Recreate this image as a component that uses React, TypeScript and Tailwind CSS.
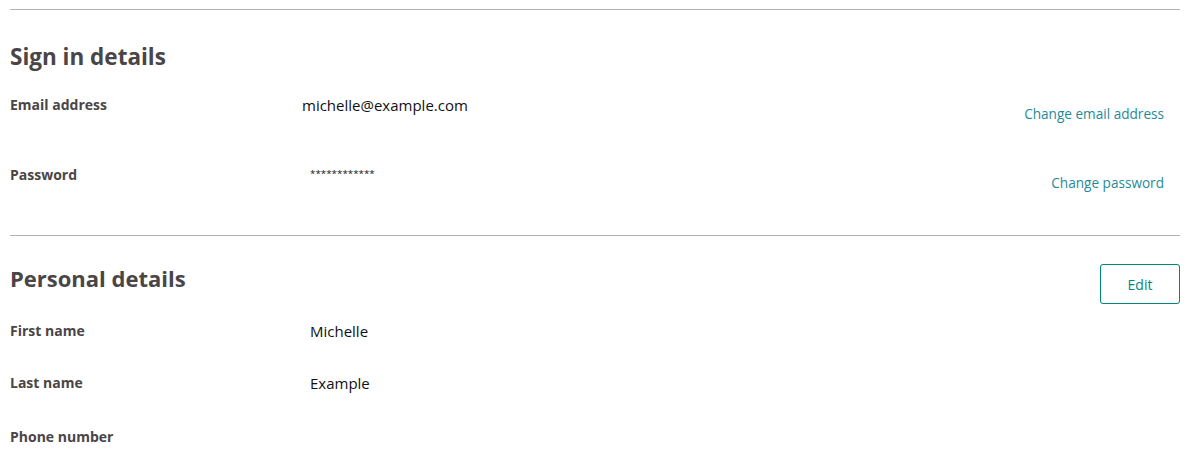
const font = { fontFamily: '"Open Sans", "Lato", sans-serif' };

function Row({
  label,
  value,
  valueClass = "ml-2 text-[15px] leading-5",
  action,
  actionClass = "",
  className = "",
}: {
  label: string;
  value?: string;
  valueClass?: string;
  action?: string;
  actionClass?: string;
  className?: string;
}) {
  return (
    <div className={`flex items-start ${className}`}>
      <div className="w-[292px] shrink-0 text-[14px] leading-5 font-bold text-[#4a4546]">
        {label}
      </div>
      <div className={`flex-1 text-[#111] ${valueClass}`}>{value}</div>
      {action && (
        <a
          href="#"
          className={`pr-4 text-[13.6px] leading-5 text-[#1f8a99] ${actionClass}`}
        >
          {action}
        </a>
      )}
    </div>
  );
}

export default function App() {
  return (
    <div className="min-h-[460px] bg-white px-[10px] pt-[9px]" style={font}>
      {/* Sign in details */}
      <hr className="border-0 border-t border-[#b3b3b3]" />
      <h2 className="mt-[33px] text-[22.5px] leading-7 font-bold text-[#4a4546]">
        Sign in details
      </h2>
      <Row
        className="mt-6"
        label="Email address"
        value="michelle@example.com"
        valueClass="text-[15px] leading-5"
        action="Change email address"
        actionClass="mt-[9px]"
      />
      <Row
        className="mt-[41px]"
        label="Password"
        value="************"
        valueClass="ml-2 mt-[3px] text-[9.8px] leading-3"
        action="Change password"
        actionClass="mt-2"
      />

      {/* Personal details */}
      <hr className="mt-[42px] border-0 border-t border-[#b3b3b3]" />
      <div className="mt-7 flex items-start justify-between">
        <h2 className="text-[22px] leading-7 font-bold text-[#4a4546]">
          Personal details
        </h2>
        <button className="h-10 w-20 rounded-[3px] border border-[#00867f] text-[14px] text-[#00867f]">
          Edit
        </button>
      </div>
      <Row className="mt-[17px]" label="First name" value="Michelle" />
      <Row className="mt-8" label="Last name" value="Example" />
      <Row className="mt-[34px]" label="Phone number" />
    </div>
  );
}
